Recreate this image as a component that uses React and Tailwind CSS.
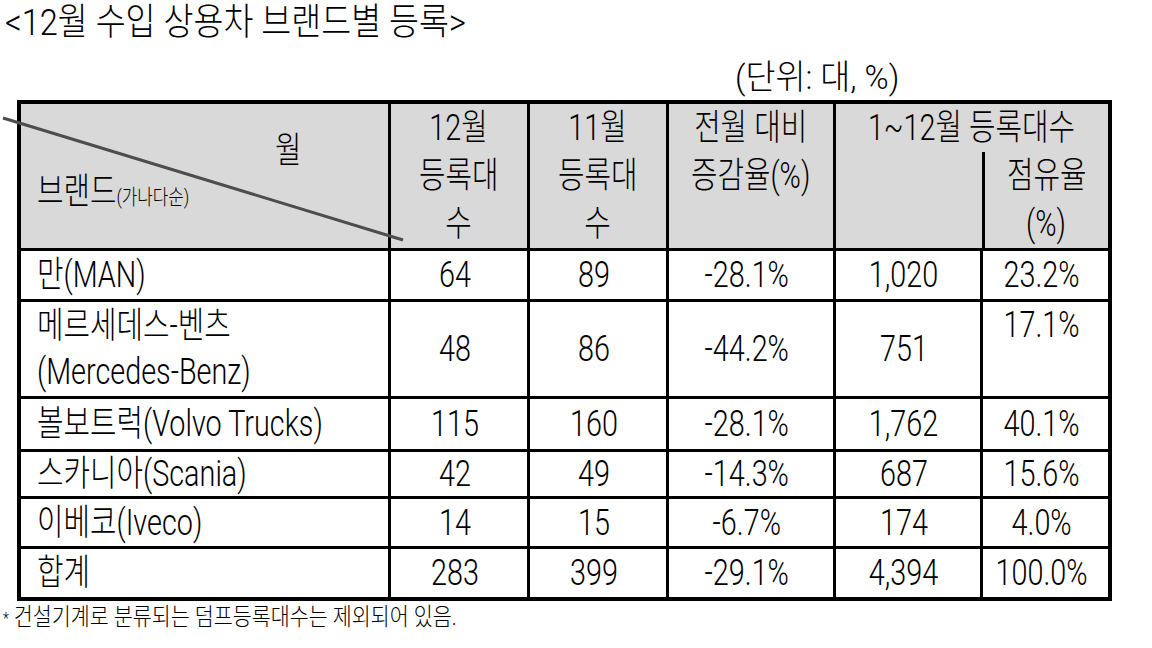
import React from "react"

const rows = [
  { name: ["만(MAN)"], dec: "64", nov: "89", rate: "-28.1%", ytd: "1,020", share: "23.2%", h: "h-[51px]" },
  {
    name: ["메르세데스-벤츠", "(Mercedes-Benz)"],
    dec: "48",
    nov: "86",
    rate: "-44.2%",
    ytd: "751",
    share: "17.1%",
    shareTop: true,
    h: "h-[97px]",
  },
  { name: ["볼보트럭(Volvo Trucks)"], dec: "115", nov: "160", rate: "-28.1%", ytd: "1,762", share: "40.1%", h: "h-[53px]" },
  { name: ["스카니아(Scania)"], dec: "42", nov: "49", rate: "-14.3%", ytd: "687", share: "15.6%", h: "h-[47px]" },
  { name: ["이베코(Iveco)"], dec: "14", nov: "15", rate: "-6.7%", ytd: "174", share: "4.0%", h: "h-[50px]" },
  { name: ["합계"], dec: "283", nov: "399", rate: "-29.1%", ytd: "4,394", share: "100.0%", h: "h-[51px]" },
]

// the source document uses a narrow gothic face, so squeeze the text a bit
const Sq = ({ children, left }) => (
  <span className={`inline-block whitespace-nowrap scale-x-[0.8] ${left ? "origin-left" : "origin-center"}`}>
    {children}
  </span>
)

const cell = "border-[3px] border-black p-0"
const num = `${cell} text-center align-middle pr-2`

export default function App() {
  return (
    <div className="w-[1152px] h-[648px] bg-white text-black font-['Roboto','Noto_Sans_CJK_KR',sans-serif] font-light overflow-hidden">
      {/* title */}
      <div className="pl-[5px] pt-[3px] text-[37px] leading-[40px]">
        <span className="inline-block whitespace-nowrap scale-x-[0.88] origin-left">&lt;12월 수입 상용차 브랜드별 등록&gt;</span>
      </div>
      <div className="ml-[735px] mt-[14px] text-[34px] leading-[40px]">
        <span className="inline-block whitespace-nowrap scale-x-[0.96] origin-left">(단위: 대, %)</span>
      </div>

      <div className="relative ml-[17px] mt-[3px] w-[1091px]">
        <table className="w-[1091px] table-fixed border-collapse border-[4px] border-black text-[36px]">
          <colgroup>
            <col className="w-[370px]" />
            <col className="w-[139px]" />
            <col className="w-[139px]" />
            <col className="w-[167px]" />
            <col className="w-[147px]" />
            <col className="w-[129px]" />
          </colgroup>
          <thead>
            <tr className="h-[147px] bg-[#d9d9d9] leading-[48px]">
              <th className={`${cell} align-top font-light text-left`}>
                <div className="pl-[254px] pt-[30px] leading-[34px]">
                  <Sq left>월</Sq>
                </div>
                <div className="pl-[16px] mt-[6px] leading-[36px]">
                  <Sq left>
                    브랜드<span className="text-[21px]">(가나다순)</span>
                  </Sq>
                </div>
              </th>
              <th className={`${cell} align-top font-light text-center`}>
                <div><Sq>12월</Sq></div>
                <div><Sq>등록대</Sq></div>
                <div><Sq>수</Sq></div>
              </th>
              <th className={`${cell} align-top font-light text-center`}>
                <div><Sq>11월</Sq></div>
                <div><Sq>등록대</Sq></div>
                <div><Sq>수</Sq></div>
              </th>
              <th className={`${cell} align-top font-light text-center`}>
                <div><Sq>전월 대비</Sq></div>
                <div><Sq>증감율(%)</Sq></div>
              </th>
              <th colSpan={2} className={`${cell} align-top font-light`}>
                <div className="text-center"><Sq>1~12월 등록대수</Sq></div>
                <div className="flex h-[96px]">
                  <div className="w-[146px]" />
                  <div className="flex-1 border-l-[3px] border-black text-center">
                    <div><Sq>점유율</Sq></div>
                    <div><Sq>(%)</Sq></div>
                  </div>
                </div>
              </th>
            </tr>
          </thead>
          <tbody>
            {rows.map((r) => (
              <tr key={r.name[0]} className={`${r.h} leading-[40px]`}>
                <td className={`${cell} pl-[16px] align-middle ${r.name.length > 1 ? "leading-[46px]" : ""}`}>
                  {r.name.map((n) => (
                    <div key={n}><Sq left>{n}</Sq></div>
                  ))}
                </td>
                <td className={num}><Sq>{r.dec}</Sq></td>
                <td className={num}><Sq>{r.nov}</Sq></td>
                <td className={num}><Sq>{r.rate}</Sq></td>
                <td className={num}><Sq>{r.ytd}</Sq></td>
                <td className={`${cell} text-center pr-2 ${r.shareTop ? "align-top pt-[3px]" : "align-middle"}`}>
                  <Sq>{r.share}</Sq>
                </td>
              </tr>
            ))}
          </tbody>
        </table>

        {/* diagonal split line in the corner cell */}
        <svg className="absolute left-0 top-0 overflow-visible pointer-events-none" width="1" height="1">
          <line x1="-14" y1="18" x2="386" y2="140" stroke="#4d4d4d" strokeWidth="3" />
        </svg>
      </div>

      <div className="pl-[3px] mt-[2px] text-[24px] leading-[28px]">
        <span className="inline-block whitespace-nowrap scale-x-[0.86] origin-left">
          <span className="text-[16px] align-middle">*</span> 건설기계로 분류되는 덤프등록대수는 제외되어 있음.
        </span>
      </div>
    </div>
  )
}
